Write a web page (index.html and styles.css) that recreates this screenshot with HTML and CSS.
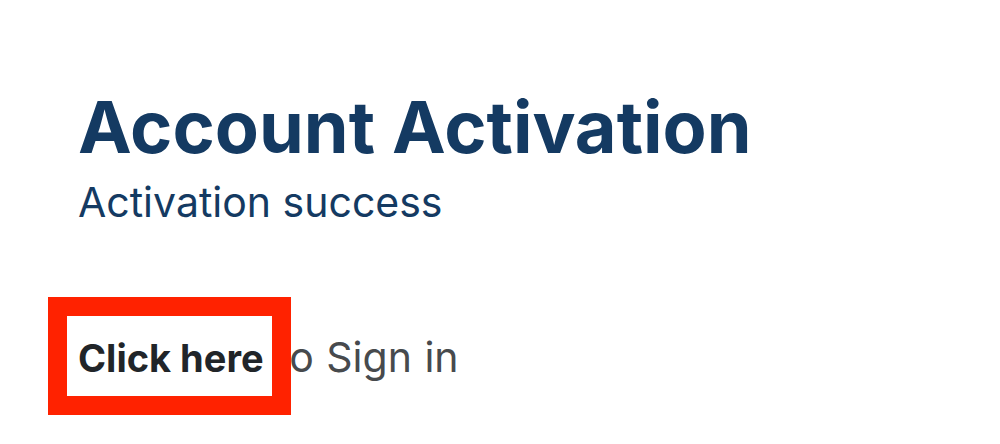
FILE: index.html
```html
<!DOCTYPE html>
<html lang="en">
<head>
<meta charset="utf-8">
<title>Account Activation</title>
<link rel="stylesheet" href="styles.css">
</head>
<body>
<main class="page">
  <h1 class="title">Account Activation</h1>
  <p class="subtitle">Activation success</p>
  <p class="signin"><span class="link">Click here<span class="highlight"></span></span> to Sign in</p>
</main>
</body>
</html>
```

FILE: styles.css
```css
html, body {
  margin: 0;
  padding: 0;
  background: #ffffff;
}
body {
  font-family: Inter, "Noto Sans", "Liberation Sans", sans-serif;
  width: 1000px;
  height: 444px;
  overflow: hidden;
}
.page {
  padding: 85px 0 0 78px;
}
.title {
  margin: 0;
  font-size: 72px;
  line-height: 84px;
  font-weight: 700;
  color: #143a62;
  letter-spacing: 0;
}
.subtitle {
  margin: 9px 0 0;
  font-size: 41px;
  line-height: 48px;
  font-weight: 400;
  color: #143a62;
}
.signin {
  margin: 108px 0 0;
  font-size: 41px;
  line-height: 46px;
  word-spacing: 1px;
  color: #474a4d;
}
.link {
  position: relative;
  font-size: 38px;
  font-weight: 700;
  word-spacing: 0;
  color: #212529;
}
.highlight {
  position: absolute;
  left: -30px;
  top: -38px;
  width: 205px;
  height: 80px;
  border: 19px solid #ff2200;
  pointer-events: none;
}
```
